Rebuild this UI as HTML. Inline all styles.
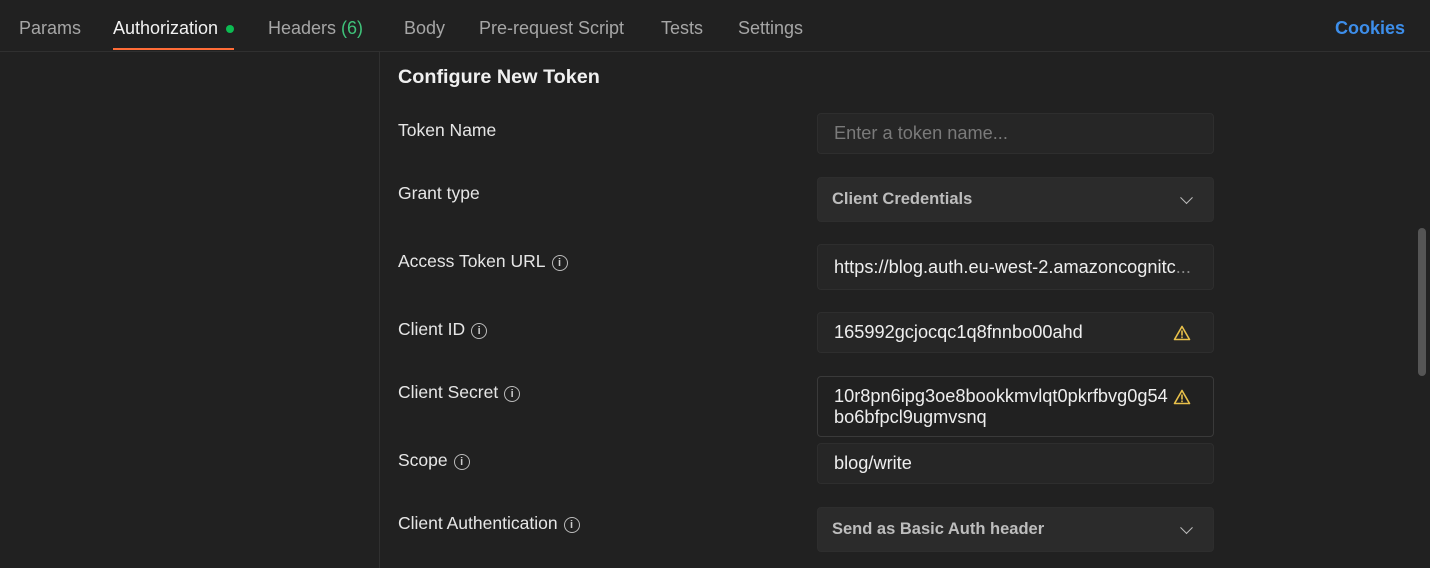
<!DOCTYPE html>
<html><head><style>
body{margin:0;width:1430px;height:568px;background:#212121;font-family:"Liberation Sans",sans-serif;color:#e6e6e6;overflow:hidden;position:relative}
.tabs{position:absolute;top:0;left:0;right:0;height:51px;border-bottom:1px solid #303030}
.tab{position:absolute;top:18px;font-size:18px;color:#a6a6a6}
.act{color:#f2f2f2}
.ul{position:absolute;left:113px;top:48px;width:121px;height:2px;background:#ff6c37}
.vl{position:absolute;left:379px;top:52px;width:1px;height:516px;background:#303030}
.lbl{position:absolute;left:398px;font-size:17.5px;color:#e6e6e6}
.info{display:inline-block;width:14px;height:14px;border:1.5px solid #bbb;border-radius:50%;font-size:11px;line-height:14px;text-align:center;margin-left:6px;vertical-align:1px;color:#ccc;font-weight:bold}
.box{position:absolute;left:817px;width:397px;background:#262626;border:1px solid #2e2e2e;border-radius:4px;box-sizing:border-box;font-size:18.2px;color:#eee;padding-left:16px}
.sel{font-weight:bold;color:#bdbdbd;padding-left:14px;font-size:16.5px}
.chev{position:absolute;right:22px;top:50%;width:8px;height:8px;border-right:1.5px solid #bbb;border-bottom:1.5px solid #bbb;transform:translateY(-75%) rotate(45deg)}
.warn{position:absolute;right:22px;width:18px;height:16px}
</style></head><body>
<div class="tabs">
<span class="tab" style="left:19px">Params</span>
<span class="tab act" style="left:113px">Authorization</span>
<span style="position:absolute;left:226px;top:25px;width:8px;height:8px;border-radius:50%;background:#0cbb52"></span>
<span class="tab" style="left:268px">Headers <span style="color:#3fc37a">(6)</span></span>
<span class="tab" style="left:404px">Body</span>
<span class="tab" style="left:479px">Pre-request Script</span>
<span class="tab" style="left:661px">Tests</span>
<span class="tab" style="left:738px">Settings</span>
<span class="tab" style="left:1335px;color:#3d8eea;font-weight:bold">Cookies</span>
<div class="ul"></div>
</div>
<div class="vl"></div>
<div class="lbl" style="top:66px;font-size:19.8px;font-weight:bold;color:#f0f0f0">Configure New Token</div>
<div class="lbl" style="top:120px">Token Name</div>
<div class="box" style="top:113px;height:41px;line-height:39px;color:#7a7a7a">Enter a token name...</div>
<div class="lbl" style="top:183px">Grant type</div>
<div class="box sel" style="top:177px;height:45px;line-height:43px;background:#2b2b2b">Client Credentials<span class="chev"></span></div>
<div class="lbl" style="top:251px">Access Token URL<span class="info">i</span></div>
<div class="box" style="top:244px;height:46px;line-height:44px;white-space:nowrap;overflow:hidden">https://blog.auth.eu-west-2.amazoncognitc<span style="color:#888">...</span></div>
<div class="lbl" style="top:319px">Client ID<span class="info">i</span></div>
<div class="box" style="top:312px;height:41px;line-height:39px">165992gcjocqc1q8fnnbo00ahd
<svg class="warn" style="top:12px" viewBox="0 0 18 16"><path d="M9 1.5L16.5 14.5H1.5Z" fill="none" stroke="#e8c04a" stroke-width="1.6" stroke-linejoin="round"/><path d="M9 6v4M9 12v0.5" stroke="#e8c04a" stroke-width="1.6" stroke-linecap="round"/></svg></div>
<div class="lbl" style="top:382px">Client Secret<span class="info">i</span></div>
<div class="box" style="top:376px;height:61px;line-height:21px;padding-top:9px;background:#212121;border-color:#3a3a3a;white-space:nowrap">10r8pn6ipg3oe8bookkmvlqt0pkrfbvg0g54<br>bo6bfpcl9ugmvsnq
<svg class="warn" style="top:12px" viewBox="0 0 18 16"><path d="M9 1.5L16.5 14.5H1.5Z" fill="none" stroke="#e8c04a" stroke-width="1.6" stroke-linejoin="round"/><path d="M9 6v4M9 12v0.5" stroke="#e8c04a" stroke-width="1.6" stroke-linecap="round"/></svg></div>
<div class="lbl" style="top:450px">Scope<span class="info">i</span></div>
<div class="box" style="top:443px;height:41px;line-height:39px">blog/write</div>
<div class="lbl" style="top:513px">Client Authentication<span class="info">i</span></div>
<div class="box sel" style="top:507px;height:45px;line-height:43px;background:#2b2b2b">Send as Basic Auth header<span class="chev"></span></div>
<div style="position:absolute;left:1418px;top:228px;width:8px;height:148px;border-radius:4px;background:#555"></div>
</body></html>
